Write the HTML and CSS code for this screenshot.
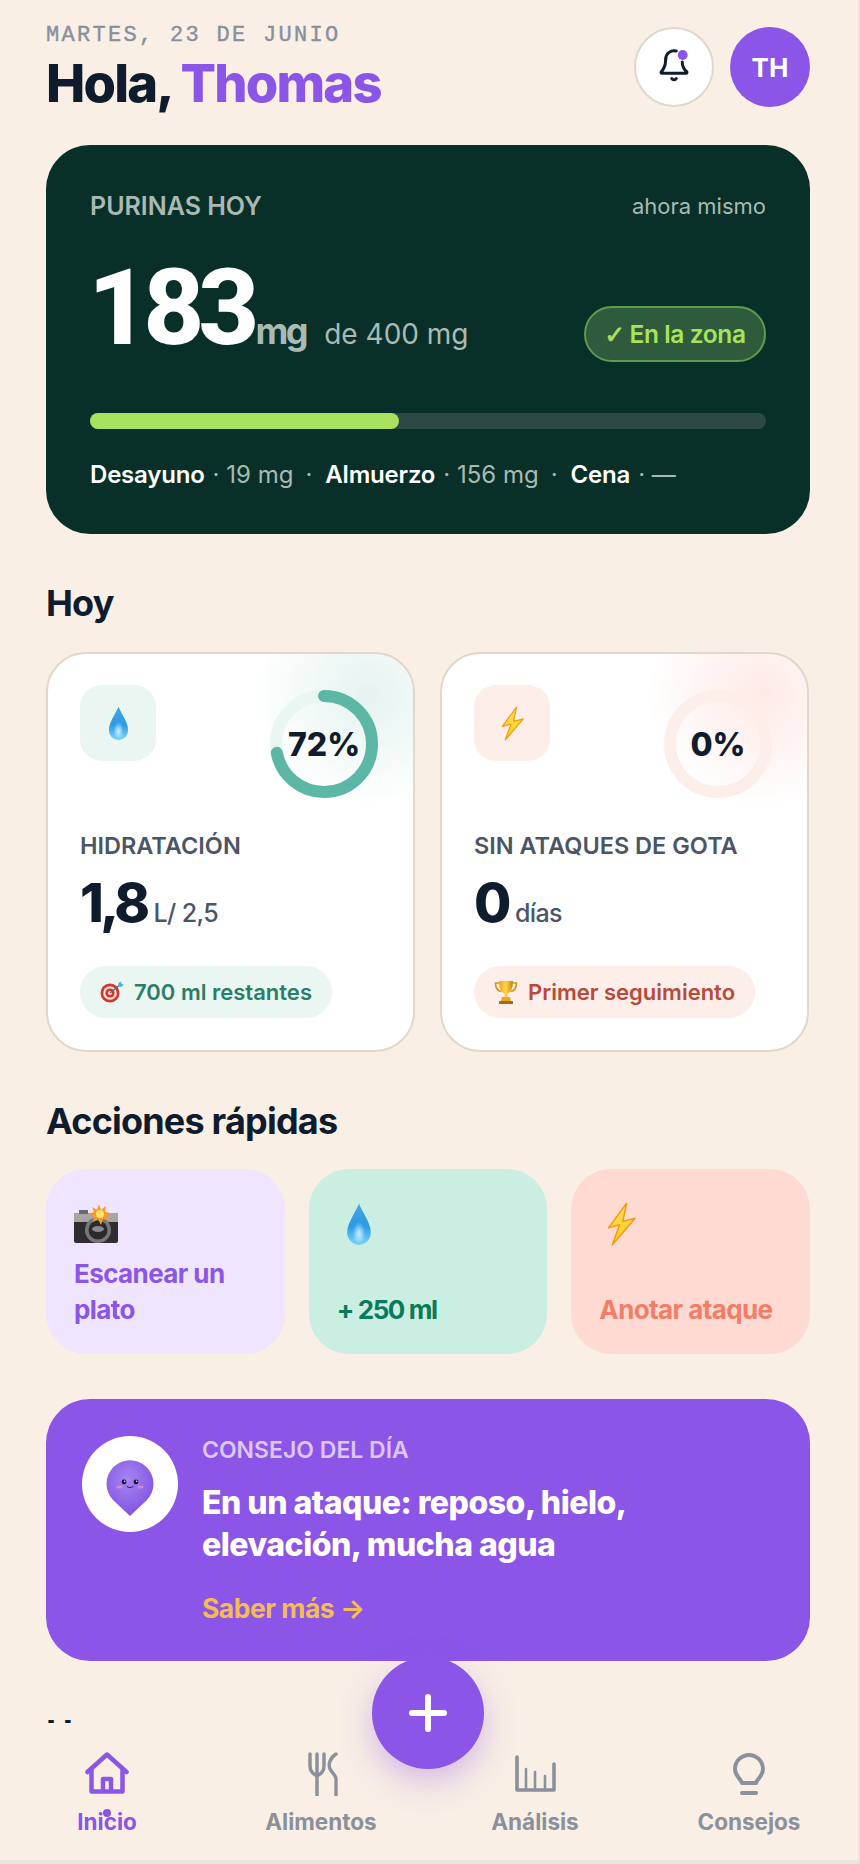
FILE: index.html
```html
<!DOCTYPE html>
<html lang="es">
  <head>
    <meta charset="UTF-8" />
    <meta name="viewport" content="width=device-width, initial-scale=1.0" />
    <title>Inicio</title>
    <link rel="stylesheet" href="styles.css">
  </head>
  <body>
    <svg class="defs" width="0" height="0" aria-hidden="true">
      <defs>
        <linearGradient id="dropFill" x1="0" y1="0" x2="0" y2="1">
          <stop offset="0" stop-color="#4aa6e0" />
          <stop offset="0.55" stop-color="#2a9be6" />
          <stop offset="1" stop-color="#7fd6f7" />
        </linearGradient>
        <radialGradient id="dropShine" cx="0.5" cy="0.72" r="0.42">
          <stop offset="0" stop-color="#c9f0fd" />
          <stop offset="1" stop-color="#c9f0fd" stop-opacity="0" />
        </radialGradient>
        <linearGradient id="boltFill" x1="0" y1="0" x2="0" y2="1">
          <stop offset="0" stop-color="#ffe45c" />
          <stop offset="1" stop-color="#ffc91f" />
        </linearGradient>
        <linearGradient id="goldFill" x1="0" y1="0" x2="1" y2="0">
          <stop offset="0" stop-color="#f0a81c" />
          <stop offset="0.5" stop-color="#fcd34a" />
          <stop offset="1" stop-color="#c9800f" />
        </linearGradient>
        <radialGradient id="pinFill" cx="0.45" cy="0.35" r="0.7">
          <stop offset="0" stop-color="#a685f2" />
          <stop offset="1" stop-color="#7f4fe0" />
        </radialGradient>
        <symbol id="drop" viewBox="0 0 24 40">
          <path d="M12 0.5C10.5 6 1 18 1 27.5a11 11.5 0 0 0 22 0C23 18 13.5 6 12 0.5Z" fill="url(#dropFill)" />
          <path d="M12 10C10 16 5 22 5 28a7 8 0 0 0 14 0c0-6-5-12-7-18Z" fill="url(#dropShine)" />
        </symbol>
        <symbol id="bolt" viewBox="0 0 24 34">
          <path d="M16 1 2 20 10.500 17.500 5 33 22.500 12.500 13 15Z" fill="url(#boltFill)" stroke="#f39c12" stroke-width="1.200" stroke-linejoin="round" />
        </symbol>
      </defs>
    </svg>

    <div class="app">
      <header class="top">
        <div>
          <div class="date">MARTES, 23 DE JUNIO</div>
          <h1>Hola, <span class="accent">Thomas</span></h1>
        </div>
        <div class="top-actions">
          <div class="round-btn bell">
            <svg width="36" height="36" viewBox="0 0 24 24" fill="none" stroke="#0f1c2e" stroke-width="2" stroke-linecap="round" stroke-linejoin="round">
              <path d="M6.5 8a5.5 5.5 0 0 1 7-5.3" />
              <path d="M6.5 8c0 6-3 8.500-3 8.500a.6.6 0 0 0 .5 1h16a.6.6 0 0 0 .5-1s-3-2.500-3-6.500" />
              <path d="M10.500 21a1.700 1.700 0 0 0 3 0" />
              <circle cx="17.800" cy="5.300" r="3.300" fill="#8b55e8" stroke="none" />
            </svg>
          </div>
          <div class="round-btn avatar">TH</div>
        </div>
      </header>

      <section class="hero">
        <div class="hero-head">
          <span class="hero-label">PURINAS HOY</span>
          <span class="hero-time">ahora mismo</span>
        </div>
        <div class="hero-main">
          <div class="hero-value">
            <span class="big">183</span><span class="unit">mg</span><span class="limit">de 400 mg</span>
          </div>
          <span class="zone"><span class="zone-check">✓</span>En la zona</span>
        </div>
        <div class="bar"><div class="bar-fill" style="width: 45.75%"></div></div>
        <div class="meals">
          <b>Desayuno</b><span>· 19 mg</span><i>·</i>
          <b>Almuerzo</b><span>· 156 mg</span><i>·</i>
          <b>Cena</b><span>· —</span>
        </div>
      </section>

      <h2>Hoy</h2>
      <div class="stats">
        <article class="stat stat-water">
          <div class="stat-top">
            <div class="stat-icon"><svg class="drop-sm"><use href="#drop" /></svg></div>
            <div class="ring">
              <svg width="108" height="108" viewBox="0 0 108 108">
                <circle class="ring-track" cx="54" cy="54" r="48" />
                <circle class="ring-value" cx="54" cy="54" r="48" stroke-dasharray="217 302" transform="rotate(-90 54 54)" />
              </svg>
              <span>72%</span>
            </div>
          </div>
          <div class="stat-label">HIDRATACIÓN</div>
          <div class="stat-value">1,8<small>L/ 2,5</small></div>
          <div class="stat-pill">
            <svg width="24" height="22" viewBox="0 0 24 22">
              <circle cx="10" cy="12" r="9.500" fill="#d8342c" />
              <circle cx="10" cy="12" r="6.800" fill="#f6e3dc" />
              <circle cx="10" cy="12" r="4.600" fill="#d8342c" />
              <circle cx="10" cy="12" r="2" fill="#f6e3dc" />
              <path d="M10 12 20 4" stroke="#5d6b70" stroke-width="1.500" />
              <path d="M18.500 2 21 0.500 21.500 3 24 3.500 21 6 18.500 5.500Z" fill="#3fb6c9" />
            </svg>
            700 ml restantes
          </div>
        </article>

        <article class="stat stat-attack">
          <div class="stat-top">
            <div class="stat-icon"><svg class="bolt-sm"><use href="#bolt" /></svg></div>
            <div class="ring">
              <svg width="108" height="108" viewBox="0 0 108 108">
                <circle class="ring-track" cx="54" cy="54" r="48" />
              </svg>
              <span>0%</span>
            </div>
          </div>
          <div class="stat-label">SIN ATAQUES DE GOTA</div>
          <div class="stat-value">0<small>días</small></div>
          <div class="stat-pill">
            <svg width="24" height="24" viewBox="0 0 24 24">
              <path d="M5 3H1.500c0 5 2 8 6 8.500M19 3h3.500c0 5-2 8-6 8.500" fill="none" stroke="#d9960f" stroke-width="1.600" />
              <path d="M5 1h14c0 7-2 11-5.500 12.500V17h-3v-3.500C7 12 5 8 5 1Z" fill="url(#goldFill)" />
              <path d="M8 17h8l1 4H7Z" fill="#e6a61e" />
              <rect x="5" y="21" width="14" height="3" rx="0.500" fill="#a9690d" />
            </svg>
            Primer seguimiento
          </div>
        </article>
      </div>

      <h2>Acciones rápidas</h2>
      <div class="quick">
        <div class="tile tile-scan">
          <div class="tile-icon">
            <svg width="44" height="40" viewBox="0 0 44 40">
              <rect x="0" y="9" width="44" height="30" rx="2" fill="#2e2e30" />
              <rect x="0" y="9" width="44" height="9" fill="#a9a6a2" />
              <rect x="5" y="6" width="9" height="4" fill="#6a6a6c" />
              <circle cx="24" cy="26" r="13" fill="#77777a" />
              <circle cx="24" cy="26" r="9.500" fill="#2a2a2c" />
              <ellipse cx="24" cy="25" rx="6" ry="3" fill="#8a8a8d" />
              <path d="M25 0 27 6 32 2 31 8 37 9 32 12 35 17 29 15 27 21 24 15 19 18 20 12 15 10 20 8 18 3 23 6Z" fill="#f59a23" />
              <circle cx="26" cy="10" r="4" fill="#ffe46b" />
            </svg>
          </div>
          <span>Escanear un plato</span>
        </div>
        <div class="tile tile-water">
          <div class="tile-icon"><svg class="drop-lg"><use href="#drop" /></svg></div>
          <span class="tight">+ 250 ml</span>
        </div>
        <div class="tile tile-attack">
          <div class="tile-icon"><svg class="bolt-lg"><use href="#bolt" /></svg></div>
          <span>Anotar ataque</span>
        </div>
      </div>

      <section class="tip">
        <div class="tip-avatar">
          <svg width="48" height="58" viewBox="0 0 48 58">
            <path d="M24 57 7 41A23.500 23.500 0 1 1 41 41Z" fill="url(#pinFill)" />
            <circle cx="18" cy="23" r="2.400" fill="#1d1440" />
            <circle cx="30" cy="23" r="2.400" fill="#1d1440" />
            <circle cx="18.700" cy="22.200" r="0.700" fill="#fff" />
            <circle cx="30.700" cy="22.200" r="0.700" fill="#fff" />
            <path d="M21 27.500c2 1.500 4 1.500 6 0" fill="none" stroke="#1d1440" stroke-width="0.900" stroke-linecap="round" />
            <ellipse cx="13.500" cy="28" rx="3" ry="1.500" fill="#f19ab8" opacity="0.6" />
            <ellipse cx="34.500" cy="28" rx="3" ry="1.500" fill="#f19ab8" opacity="0.6" />
          </svg>
        </div>
        <div class="tip-body">
          <div class="tip-label">CONSEJO DEL DÍA</div>
          <div class="tip-title">En un ataque: reposo, hielo, elevación, mucha agua</div>
          <div class="tip-link">Saber más →</div>
        </div>
      </section>

      <h2>Hoy</h2>

      <nav class="nav">
        <div class="nav-item active">
          <svg width="44" height="44" viewBox="0 0 44 44" fill="none" stroke="currentColor" stroke-width="4.500" stroke-linecap="round" stroke-linejoin="round">
            <path d="M2.500 20 22 2.500 41.500 20" />
            <path d="M6.500 17V39.500H37.500V17" />
            <path d="M18 39V27H26V39" />
          </svg>
          <span>Inicio</span>
          <i class="nav-dot"></i>
        </div>
        <div class="nav-item">
          <svg width="44" height="44" viewBox="0 0 44 44" fill="none" stroke="currentColor" stroke-width="3.400" stroke-linecap="round" stroke-linejoin="round">
            <path d="M11 2V14C11 19 14 22 18 24" />
            <path d="M25 2V14C25 19 22 22 18 24V43" />
            <path d="M18 2V24" />
            <path d="M37 2C31 6 29 12 31 17 33 21 37 23 37 27V43" />
          </svg>
          <span>Alimentos</span>
        </div>
        <div class="nav-item">
          <svg width="44" height="44" viewBox="0 0 44 44" fill="none" stroke="currentColor" stroke-linecap="round" stroke-linejoin="round">
            <path d="M4 5V38H41V12" stroke-width="3.600" />
            <path d="M13 38V17M22 38V20M32 38V24" stroke-width="2.600" />
          </svg>
          <span>Análisis</span>
        </div>
        <div class="nav-item">
          <svg width="44" height="44" viewBox="0 0 44 44" fill="none" stroke="currentColor" stroke-width="4" stroke-linecap="round" stroke-linejoin="round">
            <path d="M15 31C14 27 8 24 8 17A14 14 0 0 1 36 17C36 24 30 27 29 31Z" />
            <path d="M15 41H29" />
          </svg>
          <span>Consejos</span>
        </div>
      </nav>

      <div class="fab">
        <svg width="40" height="40" viewBox="0 0 40 40" fill="none" stroke="#fff" stroke-width="6" stroke-linecap="round">
          <path d="M20 4V36M4 20H36" />
        </svg>
      </div>
    </div>
  </body>
</html>
```

FILE: styles.css
```css
body {
  margin: 0;
  background-color: #e3e7dc;
  font-family: Inter, "Noto Sans", sans-serif;
  color: #0f1c2e;
}
.defs {
  position: absolute;
}
.app {
  position: relative;
  width: 858px;
  height: 1860px;
  overflow: hidden;
  background-color: #f9efe5;
  padding: 20px 48px 0 46px;
  box-sizing: border-box;
}
.top {
  display: flex;
  justify-content: space-between;
  height: 93px;
}
.date {
  margin-top: 3px;
  font-family: "Liberation Mono", monospace;
  font-size: 22px;
  line-height: 26px;
  letter-spacing: 2.3px;
  color: #8a8f9c;
  -webkit-text-stroke: 0.4px #8a8f9c;
}
h1 {
  margin: 4px 0 0;
  font-size: 52.500px;
  line-height: 60px;
  font-weight: 800;
  letter-spacing: -1.8px;
}
.accent {
  color: #8b55e8;
}
.top-actions {
  display: flex;
  gap: 16px;
  margin-top: 7px;
}
.round-btn {
  width: 80px;
  height: 80px;
  border-radius: 50%;
  box-sizing: border-box;
  display: flex;
  align-items: center;
  justify-content: center;
}
.bell {
  background-color: #fff;
  border: 2px solid #dfd8cc;
}
.bell svg {
  margin-top: -4px;
}
.avatar {
  background-color: #8b55e8;
  color: #fff;
  font-size: 26px;
  font-weight: 700;
}

.hero {
  margin-top: 32px;
  background-color: #083028;
  border-radius: 44px;
  padding: 47px 44px 44px;
  height: 389px;
  box-sizing: border-box;
}
.hero-head {
  display: flex;
  justify-content: space-between;
  align-items: center;
  line-height: 28px;
}
.hero-label {
  font-size: 25px;
  font-weight: 600;
  color: #a9bab4;
}
.hero-time {
  font-size: 22px;
  color: #a9bab4;
}
.hero-main {
  display: flex;
  justify-content: space-between;
  align-items: flex-end;
  height: 104px;
  margin-top: 38px;
}
.hero-value {
  align-self: flex-start;
  display: flex;
  align-items: baseline;
  line-height: 100px;
}
.big {
  font-family: Roboto, sans-serif;
  font-size: 106px;
  font-weight: 800;
  letter-spacing: -6px;
  color: #fff;
  margin-left: -2px;
}
.unit {
  font-size: 36px;
  font-weight: 700;
  letter-spacing: -2.4px;
  color: #a9bab4;
  margin-left: 2px;
}
.limit {
  font-size: 28px;
  color: #a9bab4;
  margin-left: 18px;
}
.zone {
  box-sizing: border-box;
  width: 182px;
  height: 56px;
  border-radius: 28px;
  border: 2px solid #5f9a4f;
  background-color: #2f5a3c;
  color: #a8e25e;
  font-size: 24.500px;
  font-weight: 600;
  letter-spacing: -0.4px;
  display: flex;
  align-items: center;
  justify-content: center;
  gap: 5px;
}
.zone-check {
  font-family: "DejaVu Sans", sans-serif;
  font-weight: 700;
  -webkit-text-stroke: 0.8px #a8e25e;
}
.bar {
  margin-top: 51px;
  height: 16px;
  border-radius: 8px;
  background-color: #2c4a43;
}
.bar-fill {
  height: 100%;
  border-radius: 8px;
  background-color: #a8e25e;
}
.meals {
  display: flex;
  margin-top: 31px;
  line-height: 30px;
  font-size: 24px;
  color: #a9bab4;
  gap: 8px;
}
.meals b {
  color: #fff;
  font-weight: 600;
  letter-spacing: -0.2px;
}
.meals i {
  font-style: normal;
  margin: 0 5px 0 4px;
}

h2 {
  margin: 47px 0 26px;
  font-size: 36px;
  line-height: 44px;
  font-weight: 700;
  letter-spacing: -0.8px;
}
.tip + h2 {
  margin-top: 50px;
}
.stats {
  margin-top: 27px;
  display: grid;
  grid-template-columns: 369px 369px;
  gap: 25px;
}
.stat {
  height: 400px;
  box-sizing: border-box;
  border: 2px solid #e0d8c8;
  border-radius: 40px;
  padding: 32px 31px 0 32px;
}
.stat-water {
  background: radial-gradient(circle at 320px 40px, rgba(92, 184, 165, 0.16), rgba(92, 184, 165, 0) 115px), #fff;
  --soft: #e9f6f2;
  --ring: #5cb8a5;
  --pill-text: #2a7d67;
}
.stat-attack {
  background: radial-gradient(circle at 320px 40px, rgba(244, 125, 104, 0.16), rgba(244, 125, 104, 0) 115px), #fff;
  --soft: #fdeeea;
  --ring: #f47d68;
  --pill-text: #b94a3a;
}
.stat-top {
  display: flex;
  justify-content: space-between;
  align-items: flex-start;
  height: 110px;
}
.stat-icon {
  width: 76px;
  height: 76px;
  margin-top: -1px;
  border-radius: 22px;
  background-color: var(--soft);
  display: flex;
  align-items: center;
  justify-content: center;
}
.drop-sm {
  width: 21px;
  height: 35px;
}
.bolt-sm {
  width: 25px;
  height: 35px;
}
.ring {
  position: relative;
  width: 108px;
  height: 108px;
  margin: 4px 4px 0 0;
}
.ring svg {
  display: block;
}
.ring circle {
  fill: none;
  stroke-width: 12;
}
.ring-track {
  stroke: var(--soft);
}
.ring-value {
  stroke: var(--ring);
  stroke-linecap: round;
}
.ring span {
  position: absolute;
  inset: 0;
  display: flex;
  align-items: center;
  justify-content: center;
  font-size: 32px;
  font-weight: 800;
}
.stat-label {
  margin-top: 36px;
  font-size: 23.500px;
  line-height: 28px;
  font-weight: 600;
  color: #4b5568;
}
.stat-value {
  margin-top: 13px;
  font-size: 54px;
  line-height: 60px;
  font-weight: 800;
  letter-spacing: -3.5px;
}
.stat-value small {
  margin-left: 7px;
  font-size: 25px;
  font-weight: 500;
  letter-spacing: -0.6px;
  color: #4b5568;
}
.stat-pill {
  margin-top: 23px;
  display: flex;
  width: fit-content;
  align-items: center;
  gap: 10px;
  height: 52px;
  padding: 0 20px;
  border-radius: 26px;
  background-color: var(--soft);
  color: var(--pill-text);
  font-size: 22px;
  font-weight: 600;
}

.quick {
  display: grid;
  grid-template-columns: repeat(3, 1fr);
  gap: 24px;
}
.tile {
  height: 185px;
  box-sizing: border-box;
  border-radius: 40px;
  padding: 34px 28px 26px;
  display: flex;
  flex-direction: column;
  justify-content: space-between;
  font-size: 26px;
  line-height: 36px;
  font-weight: 700;
  letter-spacing: -0.6px;
}
.tile .tight {
  letter-spacing: -1.4px;
}
.tile-icon {
  width: 44px;
  height: 42px;
  display: flex;
  justify-content: center;
  align-items: center;
}
.drop-lg {
  width: 26px;
  height: 43px;
}
.bolt-lg {
  width: 31px;
  height: 44px;
}
.tile-scan {
  background-color: #efe5ff;
  color: #8b55e8;
}
.tile-water {
  background-color: #caeee2;
  color: #0a7a5c;
}
.tile-attack {
  background-color: #ffdad3;
  color: #f47d68;
}

.tip {
  margin-top: 45px;
  height: 262px;
  box-sizing: border-box;
  border-radius: 44px;
  background-color: #8b55e8;
  padding: 37px 36px;
  display: flex;
  gap: 24px;
}
.tip-avatar {
  flex: none;
  width: 96px;
  height: 96px;
  border-radius: 50%;
  background-color: #fff;
  display: flex;
  align-items: center;
  justify-content: center;
}
.tip-avatar svg {
  margin-top: 8px;
}
.tip-label {
  font-size: 23px;
  line-height: 28px;
  font-weight: 600;
  color: #dcc6fb;
}
.tip-title {
  margin-top: 18px;
  width: 480px;
  font-size: 32px;
  line-height: 42px;
  font-weight: 800;
  letter-spacing: -0.5px;
  color: #fff;
}
.tip-link {
  margin-top: 25px;
  font-size: 26.500px;
  line-height: 34px;
  font-weight: 700;
  letter-spacing: -0.5px;
  color: #f3bd4f;
}

.nav {
  position: absolute;
  left: 0;
  right: 2px;
  bottom: 0;
  height: 137px;
  background-color: #f9efe5;
  display: grid;
  grid-template-columns: repeat(4, 1fr);
}
.nav-item {
  position: relative;
  padding-top: 29px;
  display: flex;
  flex-direction: column;
  align-items: center;
  color: #8a909c;
}
.nav-item span {
  margin-top: 10px;
  font-size: 22.500px;
  line-height: 32px;
  font-weight: 700;
}
.nav-item.active {
  color: #8b55e8;
}
.nav-dot {
  position: absolute;
  top: 86px;
  left: 50%;
  width: 8px;
  height: 8px;
  margin-left: -4px;
  border-radius: 50%;
  background-color: #8b55e8;
}
.fab {
  position: absolute;
  left: 372px;
  top: 1657px;
  width: 112px;
  height: 112px;
  border-radius: 50%;
  background-color: #8b55e8;
  box-shadow: 0 12px 32px rgba(139, 85, 232, 0.35);
  display: flex;
  align-items: center;
  justify-content: center;
}
```
